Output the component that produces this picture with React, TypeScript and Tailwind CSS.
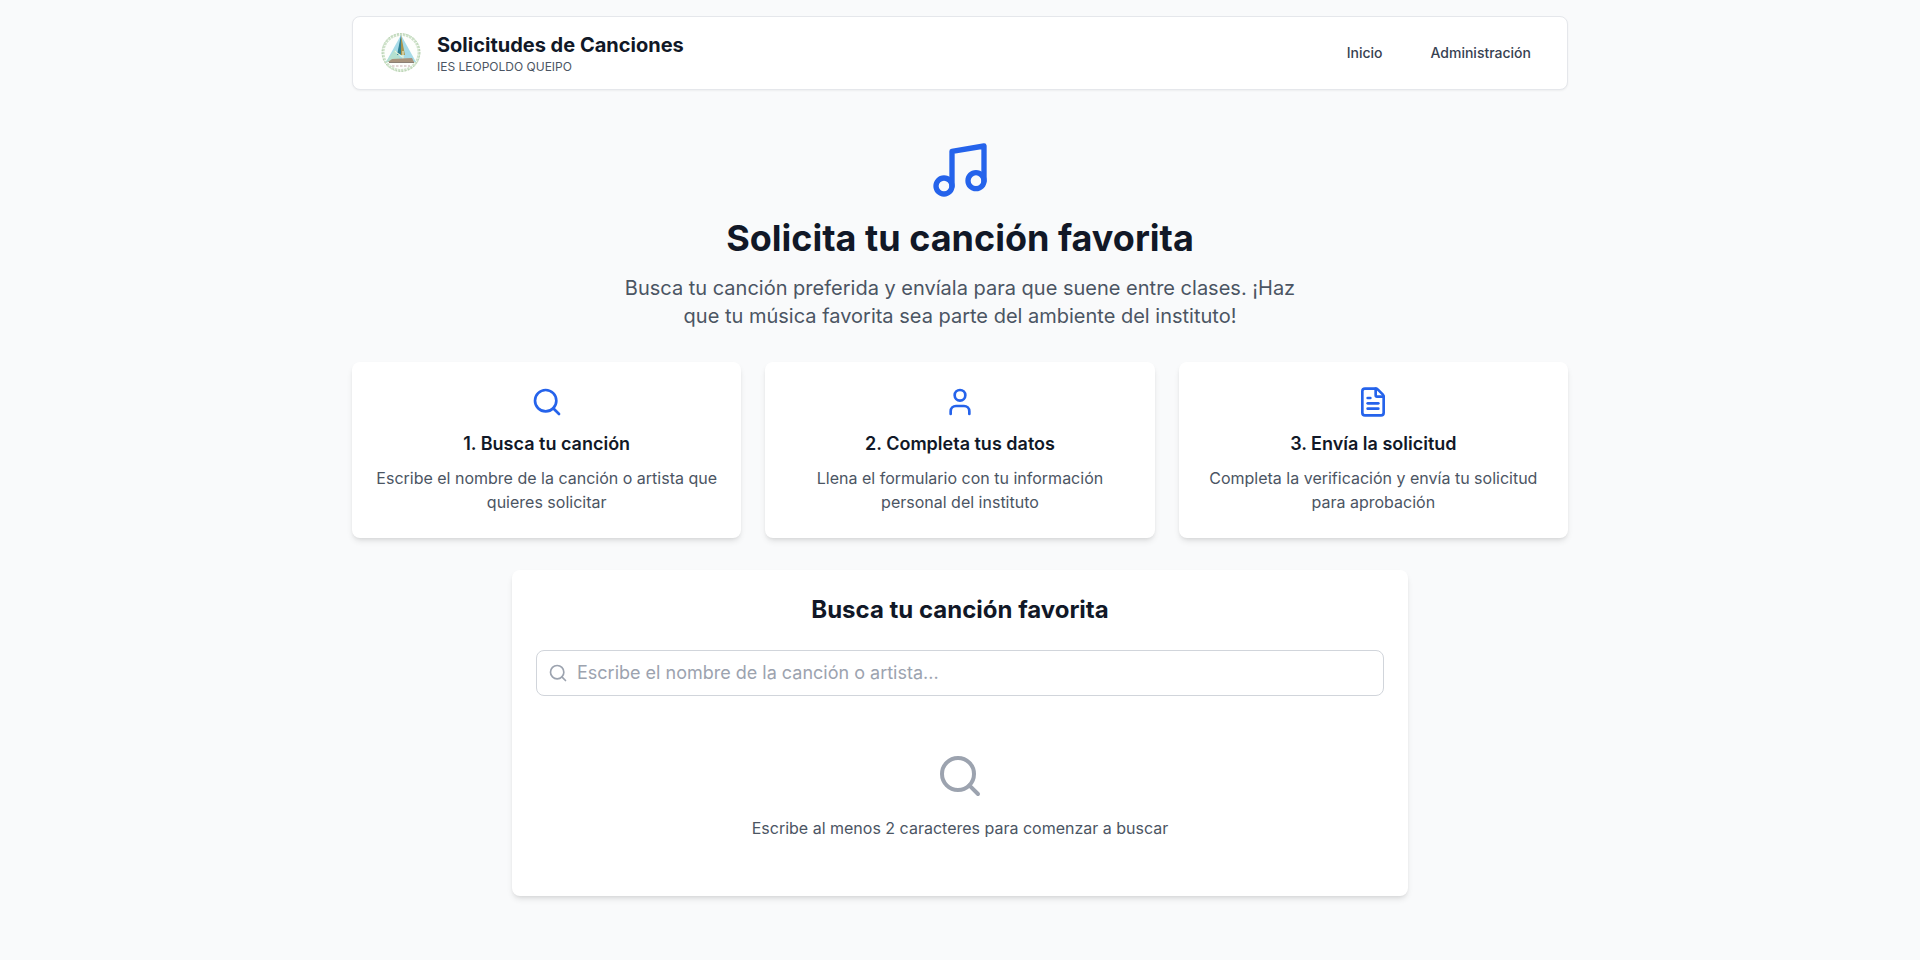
import { Music, Search, User, FileText } from "lucide-react";

function Logo() {
  return (
    <svg viewBox="0 0 48 48" className="w-12 h-12 shrink-0">
      <circle cx="24" cy="23.5" r="18" fill="#fdfefc" stroke="#cfe2ca" strokeWidth="3" strokeDasharray="2.4 0.8" />
      <circle cx="24" cy="23.5" r="18.8" fill="none" stroke="#a9c9a4" strokeWidth="0.7" strokeDasharray="1.4 1.6" />
      <path d="M24 6 L39 33 H9 Z" fill="#a6dbe8" />
      <path d="M9 33 L18 20 L25 33 Z" fill="#b4e0cf" />
      <path d="M24 6 L20 26 H24 Z" fill="#2e7f93" />
      <path d="M24 6 L28 26 H24 Z" fill="#a9964f" />
      <path d="M18 22 C20 25 23 25 25 28 M26 22 V30" stroke="#eef6d8" strokeWidth="1.1" fill="none" />
      <path d="M15 30 L35 29 L37 33 H11 Z" fill="#a8937c" />
      <path d="M12 33.5 H37" stroke="#6f5f52" strokeWidth="0.8" />
      <path d="M15 37 H33" stroke="#d8c8c8" strokeWidth="1.6" strokeDasharray="2.5 1.5" />
    </svg>
  );
}

const steps = [
  { Icon: Search, title: "1. Busca tu canción", text: "Escribe el nombre de la canción o artista que quieres solicitar" },
  { Icon: User, title: "2. Completa tus datos", text: "Llena el formulario con tu información personal del instituto" },
  { Icon: FileText, title: "3. Envía la solicitud", text: "Completa la verificación y envía tu solicitud para aprobación" },
];

export default function App() {
  return (
    <div className="min-h-screen bg-[#f9fafb] font-['Inter',sans-serif] pt-4 pb-16">
      <div className="w-[1216px] mx-auto">
        <nav className="h-[74px] bg-white border border-[#e5e7eb] rounded-lg shadow-xs px-6 flex items-center justify-between">
          <div className="flex items-center gap-3">
            <Logo />
            <div>
              <div className="text-xl leading-7 font-bold text-[#111827]">Solicitudes de Canciones</div>
              <div className="text-xs text-[#4b5563]">IES LEOPOLDO QUEIPO</div>
            </div>
          </div>
          <div className="flex items-center gap-6">
            <a className="px-3 py-2 text-sm font-medium text-[#374151]">Inicio</a>
            <a className="px-3 py-2 text-sm font-medium text-[#374151]">Administración</a>
          </div>
        </nav>

        <div className="pt-12 text-center">
          <Music className="w-16 h-16 text-[#2563eb] mx-auto mb-4" />
          <h1 className="text-4xl font-bold text-[#111827] mb-4">Solicita tu canción favorita</h1>
          <p className="text-xl text-[#4b5563] max-w-2xl mx-auto mb-8">
            Busca tu canción preferida y envíala para que suene entre clases. ¡Haz que tu música favorita sea parte del ambiente del instituto!
          </p>
        </div>

        <div className="grid grid-cols-3 gap-6 mb-8">
          {steps.map(({ Icon, title, text }) => (
            <div key={title} className="bg-white rounded-lg shadow-md p-6 text-center">
              <Icon className="w-8 h-8 text-[#2563eb] mx-auto mb-3" />
              <h3 className="text-lg font-semibold text-[#111827] mb-2">{title}</h3>
              <p className="text-base text-[#4b5563]">{text}</p>
            </div>
          ))}
        </div>

        <div className="w-[896px] mx-auto bg-white rounded-lg shadow-md p-6">
          <h2 className="text-2xl font-bold text-[#111827] text-center mb-6">Busca tu canción favorita</h2>
          <div className="relative mb-6">
            <Search className="absolute left-3 top-1/2 -translate-y-1/2 w-5 h-5 text-[#9ca3af]" />
            <input
              readOnly
              placeholder="Escribe el nombre de la canción o artista..."
              className="w-full h-[46px] pl-10 pr-4 pb-0.5 border border-[#d1d5db] rounded-lg text-lg text-[#111827] placeholder:text-[#9ca3af] outline-none"
            />
          </div>
          <div className="py-8 text-center">
            <Search className="w-12 h-12 text-[#9ca3af] mx-auto mb-4" />
            <p className="text-base text-[#4b5563]">Escribe al menos 2 caracteres para comenzar a buscar</p>
          </div>
        </div>
      </div>
    </div>
  );
}
